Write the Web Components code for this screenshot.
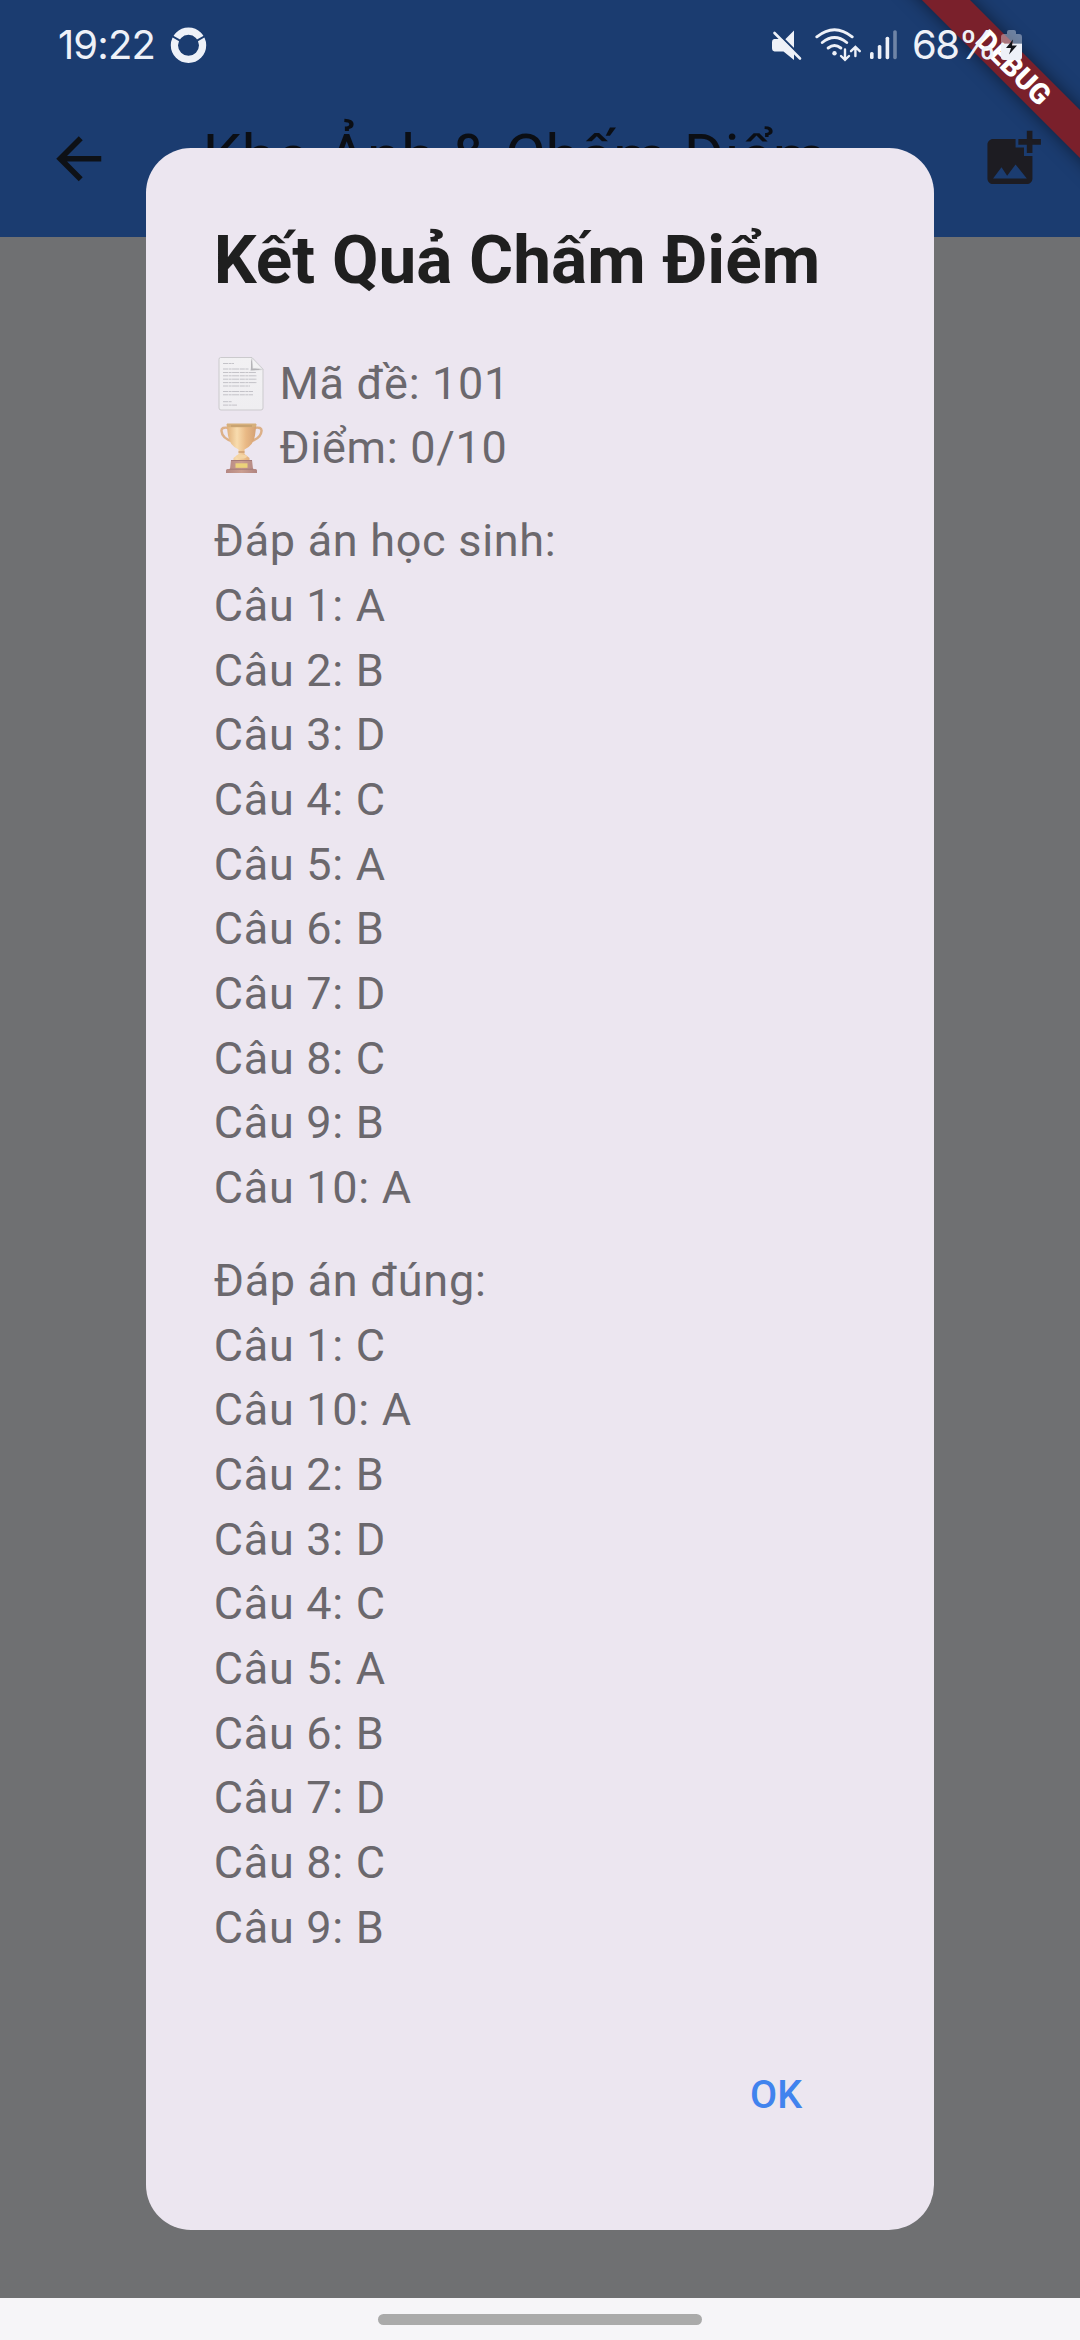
<!DOCTYPE html>
<html lang="vi">
<head>
<meta charset="utf-8">
<title>Kết Quả Chấm Điểm</title>
<style>
  html, body { margin: 0; padding: 0; }
  body { width: 1080px; height: 2340px; overflow: hidden; font-family: Roboto, sans-serif; background: #6f7072; }
</style>
</head>
<body>
<app-screen>
  <status-bar slot="status" time="19:22" battery="68%"></status-bar>
  <app-bar slot="bar">Kho Ảnh &amp; Chấm Điểm</app-bar>
  <result-dialog slot="dialog" heading="Kết Quả Chấm Điểm" action="OK">
    <answer-group>
      <text-line icon="page">Mã đề: 101</text-line>
      <text-line icon="trophy">Điểm: 0/10</text-line>
    </answer-group>
    <answer-group heading="Đáp án học sinh:" answers="1A 2B 3D 4C 5A 6B 7D 8C 9B 10A"></answer-group>
    <answer-group heading="Đáp án đúng:" answers="1C 10A 2B 3D 4C 5A 6B 7D 8C 9B"></answer-group>
  </result-dialog>
  <debug-banner slot="banner">DEBUG</debug-banner>
</app-screen>

<script>
const make = (name, render) => customElements.define(name, class extends HTMLElement {
  connectedCallback() {
    if (!this.shadowRoot) this.attachShadow({ mode: 'open' }).innerHTML = render(this);
  }
});

make('app-screen', () => `
  <style>
    :host { display: flex; flex-direction: column; position: relative; width: 1080px; height: 2340px; overflow: hidden; background: #1b3c70; }
    main { flex: 1; background: #6f7072; }
    nav { height: 42px; background: #f6f5f8; display: flex; justify-content: center; align-items: flex-start; }
    nav i { display: block; width: 324px; height: 11px; border-radius: 6px; background: #aaa; margin-top: 16px; }
    .modal { position: absolute; inset: 148.3px 146.25px 110.5px; display: flex; }
    .banner { position: absolute; top: 0; right: 0; width: 200px; height: 200px; overflow: hidden; }
  </style>
  <slot name="status"></slot>
  <slot name="bar"></slot>
  <main></main>
  <nav><i></i></nav>
  <div class="banner"><slot name="banner"></slot></div>
  <div class="modal"><slot name="dialog"></slot></div>`);

make('status-bar', el => `
  <style>
    :host { display: flex; position: relative; z-index: 2; justify-content: space-between; align-items: flex-start; height: 80px; box-sizing: border-box; padding: 25px 57px 0 58px; color: #eef1f8; font: 400 40px/40px Inter, sans-serif; }
    div { display: flex; align-items: center; height: 40px; }
    .time { letter-spacing: -0.9px; width: 112px; }
    .pct { letter-spacing: -1.6px; width: 89px; margin-left: 13px; white-space: nowrap; }
    svg { display: block; flex: none; }
  </style>
  <div>
    <span class="time">${el.getAttribute('time')}</span>
    <svg width="38" height="40" viewBox="0 0 38 40">
      <circle cx="18.5" cy="20.3" r="14.1" fill="none" stroke="#eef1f8" stroke-width="7.2"/>
      <path d="M1 10.5l9 5.2M36 10.5l-9 5.2" stroke="#1b3c70" stroke-width="2"/>
    </svg>
  </div>
  <div>
    <svg width="128" height="40" viewBox="770 25 128 40" fill="#eef1f8" stroke-linecap="round">
      <path d="M793 30.5v18L783 40.5zM773 39h8.500L793 50.500V60L782.500 51.500H773.500Q771 51 771 48V42Q771 39.500 773 39z"/>
      <path d="M776 32.500L801 57.500" stroke="#1b3c70" stroke-width="2.400"/>
      <path d="M773.500 33L799 58.500" stroke="#eef1f8" stroke-width="2.600"/>
      <g fill="none" stroke="#eef1f8" stroke-width="2.900">
        <path d="M815.800 36.800Q833.500 22.500 851.200 36.800M821.300 42.500Q833.500 32.500 845.700 42.500M827.200 48Q833.500 43.200 839.800 48"/>
        <path d="M844 49.500V59M840 56l4 3.800 4-3.800M854.400 56V47.500M850 51.200l4.400-4.200 4.400 4.200" stroke-width="2.400"/>
      </g>
      <circle cx="833.500" cy="53.300" r="2.200"/>
      <rect x="869" y="52" width="3.600" height="7" rx="1.600"/>
      <rect x="876.800" y="45" width="3.600" height="14" rx="1.600"/>
      <rect x="884.600" y="36.700" width="3.600" height="22.500" rx="1.600"/>
      <rect x="892.200" y="30.200" width="3.600" height="29" rx="1.600" opacity=".4"/>
    </svg>
    <span class="pct">${el.getAttribute('battery')}</span>
    <svg width="22" height="40" viewBox="0 0 22 40">
      <path d="M6 7q0-2 2-2h5q2 0 2 2v2h3q3 0 3 3v6.500H0V12q0-3 3-3h3z" fill="#eef1f8" opacity=".4"/>
      <path d="M0 18.500h21V32q0 3-3 3H3q-3 0-3-3z" fill="#eef1f8"/>
      <path d="M12 14.500L5 23h5l-2 6.500 8-9h-5z" fill="#121318"/>
    </svg>
  </div>`);

make('app-bar', () => `
  <style>
    :host { display: flex; align-items: center; height: 157.2px; box-sizing: border-box; padding: 0 33.9px 0 45px; background: #1b3c70; color: #0b0e14; flex: none; }
    h1 { flex: 1; margin: -4px 0 0 90px; font: 400 61.875px/74px Roboto, sans-serif; letter-spacing: .1px; white-space: nowrap; }
    svg { width: 67.5px; height: 67.5px; display: block; flex: none; margin-top: 1px; }
  </style>
  <svg viewBox="0 0 24 24" fill="#0e1116"><path d="M20 11H7.830l5.590-5.590L12 4l-8 8 8 8 1.410-1.410L7.830 13H20v-2z"/></svg>
  <h1><slot></slot></h1>
  <svg viewBox="0 0 24 24" fill="#1d1c22"><path d="M19 7v2.990s-1.990.010-2 0V7h-3s.010-1.990 0-2h3V2h2v3h3v2h-3zm-3 4V8h-3V5H5c-1.100 0-2 .900-2 2v12c0 1.100.900 2 2 2h12c1.100 0 2-.900 2-2v-8h-3zM5 19l3-4 2 3 3-4 4 5H5z"/></svg>`);

make('result-dialog', el => `
  <style>
    :host { display: flex; flex-direction: column; flex: 1; box-sizing: border-box; padding: 66.5px 67.5px 67.5px; border-radius: 45px; background: #ece6f0; }
    h2 { margin: 0 0 47px; font: 700 67.5px/90px Roboto, sans-serif; color: #1f1f1f; white-space: nowrap; }
    section { flex: 1; display: flex; flex-direction: column; gap: 28.125px; }
    footer { display: flex; justify-content: flex-end; }
    button { width: 180px; height: 135px; padding: 0; border: 0; background: none; font: 500 39.375px/56px Roboto, sans-serif; letter-spacing: .28px; color: #4183ee; }
  </style>
  <h2>${el.getAttribute('heading')}</h2>
  <section><slot></slot></section>
  <footer><button>${el.getAttribute('action')}</button></footer>`);

make('answer-group', el => {
  const heading = el.getAttribute('heading');
  const rows = (el.getAttribute('answers') || '').split(' ').filter(Boolean)
    .map(a => `<text-line>Câu ${a.slice(0, -1)}: ${a.slice(-1)}</text-line>`).join('');
  return `<style>:host { display: flex; flex-direction: column; }</style>
    ${heading ? `<text-line>${heading}</text-line>` : ''}${rows}<slot></slot>`;
});

const icons = {
  page: `<svg viewBox="0 0 64 64">
    <defs><linearGradient id="p" x1="0" y1="0" x2="0" y2="1"><stop stop-color="#f2f1f3"/><stop offset="1" stop-color="#efeef1"/></linearGradient></defs>
    <path d="M6.500 5.500h31.500L49 17v39q0 2-2 2H7q-2 0-2-2V7.500Q5 5.500 6.500 5.500z" fill="url(#p)" stroke="#cbcacd" stroke-width="1"/>
    <path d="M37 6v8.500q0 3-.5 4l12.500-.5-9-2z" fill="#b4b4b7"/><path d="M38 6L49 17.500Q44 15.800 38.800 16.500z" fill="#f3f3f4" stroke="#cfcfd1" stroke-width=".6"/>
    <path d="M9 11.500h11M9 17h26M9 20.500h33M9 23.800h34M9 27.200h34M9 30.600h34M9 34h27M9 39.500h30M9 42.800h30M9 49.700h9M9 53.100h14" stroke="#b9b8be" stroke-width="1" stroke-dasharray="5 .6 3 .5 7 .7" opacity=".8"/>
  </svg>`,
  trophy: `<svg viewBox="0 0 64 64">
    <defs><linearGradient id="g"><stop stop-color="#dfae78"/><stop offset=".35" stop-color="#f8dcae"/><stop offset=".65" stop-color="#e9b985"/><stop offset="1" stop-color="#d3a074"/></linearGradient>
    <linearGradient id="b"><stop stop-color="#b48883"/><stop offset=".5" stop-color="#cb9e90"/><stop offset="1" stop-color="#b08480"/></linearGradient></defs>
    <path d="M15 11Q7 9.500 7.500 14Q8 21.500 19 24.500M40 11q8-1.500 7.500 3Q47 21.500 36 24.500" fill="none" stroke="#dcb088" stroke-width="2.500"/>
    <path d="M12.500 7h30L41 18.500q-1.500 10-10.500 14V37l5 4v3.500H19.500V41l5-4v-4.500Q15.500 28.500 14 18.500z" fill="url(#g)"/>
    <path d="M13 6.500h29V9q0 1-2 1.200H15Q13 10 13 9z" fill="#d6b07c"/>
    <path d="M17 9h21" stroke="#bb9768" stroke-width="1"/>
    <path d="M24.500 35h6" stroke="#cd9c70" stroke-width="1.500"/>
    <ellipse cx="27.500" cy="39.500" rx="5.500" ry="2" fill="#f4d5a6"/>
    <path d="M17 43h21l1 9h2.500q1.500 0 1.500 1.500V56H12v-2.500q0-1.500 1.500-1.500H16z" fill="url(#b)"/>
    <path d="M17 43.500h21M15.500 52.200h24" stroke="#a47a78" stroke-width="1"/>
    <rect x="21.500" y="46.300" width="12" height="4.500" fill="#ebd27a"/>
  </svg>`
};

make('text-line', el => `
  <style>
    :host { display: flex; align-items: center; height: 64.6875px; font: 400 45px/64.6875px Roboto, sans-serif; letter-spacing: .703px; color: #6b686d; white-space: nowrap; }
    svg { width: 64px; height: 64px; flex: none; display: block; margin-right: 1.7px; }
  </style>${icons[el.getAttribute('icon')] || ''}<span><slot></slot></span>`);

make('debug-banner', () => `
  <style>
    :host { display: block; }
    div { position: absolute; left: -17.25px; top: 50.4px; width: 300px; height: 33.75px; box-sizing: border-box; padding-left: 2px; transform: rotate(45deg); background: #7a202b; box-shadow: 0 0 17px rgba(0,0,0,.5); text-align: center; color: #fff; font: 900 28.69px/34px Roboto, sans-serif; }
  </style>
  <div><slot></slot></div>`);
</script>
</body>
</html>
